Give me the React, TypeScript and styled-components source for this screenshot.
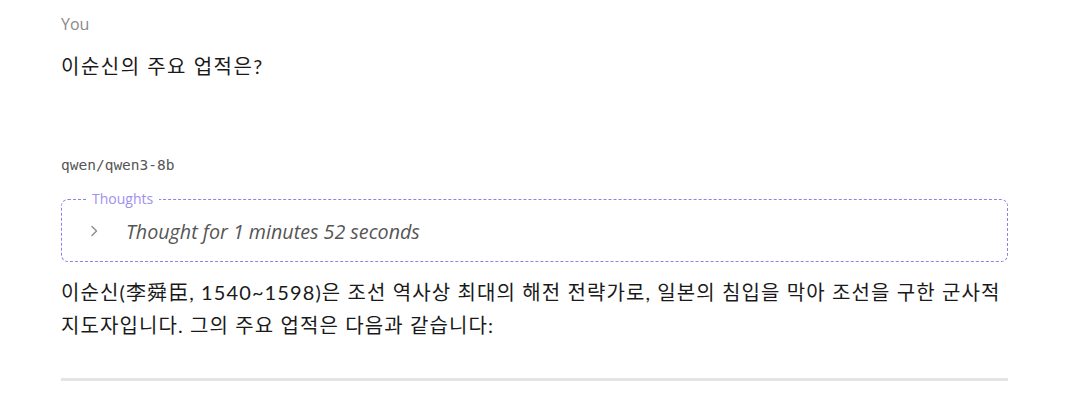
import styled, { createGlobalStyle } from 'styled-components';

const GlobalStyle = createGlobalStyle`
  body {
    margin: 0;
    background: #ffffff;
    font-family: 'Noto Sans CJK KR', 'Noto Sans', sans-serif;
  }
`;

const Page = styled.div`
  box-sizing: border-box;
  width: 1072px;
  padding: 12px 64px 0 61px;
`;

const Message = styled.div`
  display: flex;
  flex-direction: column;
`;

const Author = styled.div`
  font-family: 'Open Sans', 'Noto Sans', sans-serif;
  font-size: 16px;
  line-height: 24px;
  color: #8a8a8a;
`;

const Question = styled.div`
  margin-top: 16px;
  font-family: 'Lato', 'Noto Sans CJK KR', sans-serif;
  font-size: 20px;
  line-height: 28px;
  letter-spacing: 1.5px;
  color: #1a1a1a;
`;

const ModelName = styled.div`
  margin-top: 76px;
  font-family: 'DejaVu Sans Mono', 'Liberation Mono', monospace;
  font-size: 14.5px;
  line-height: 18px;
  color: #555;
`;

const ThoughtBox = styled.fieldset`
  margin: 17px 0 0;
  padding: 8px 24px 14px 24px;
  border: 1px dashed #8f80ea;
  border-radius: 7px;
  min-width: 0;
`;

const Legend = styled.legend`
  padding: 0 6px;
  font-family: 'Open Sans', 'Noto Sans', sans-serif;
  font-size: 14px;
  line-height: 16px;
  color: #a08ff0;
`;

const ThoughtRow = styled.div`
  display: flex;
  align-items: center;
  gap: 24px;
  height: 32px;
`;

const ThoughtLabel = styled.span`
  font-family: 'Open Sans', 'Noto Sans', sans-serif;
  font-style: italic;
  font-size: 19.7px;
  color: #555;
`;

const Answer = styled.p`
  margin: 14px 0 0;
  font-family: 'Lato', 'Noto Sans CJK KR', sans-serif;
  font-size: 20px;
  line-height: 33px;
  letter-spacing: 1.1px;
  word-break: keep-all;
  color: #1a1a1a;
`;

const Divider = styled.hr`
  margin: 36px 0 0;
  border: none;
  height: 3px;
  background: #e4e4e4;
`;

const Chevron = () => (
  <svg width="16" height="16" viewBox="0 0 16 16" fill="none">
    <path d="M6 3.5 L10.5 8 L6 12.5" stroke="#8c8c8c" strokeWidth="1.4" strokeLinecap="round" strokeLinejoin="round" />
  </svg>
);

export default function App() {
  return (
    <>
      <GlobalStyle />
      <Page>
        <Message>
          <Author>You</Author>
          <Question>이순신의 주요 업적은?</Question>
        </Message>
        <Message>
          <ModelName>qwen/qwen3-8b</ModelName>
          <ThoughtBox>
            <Legend>Thoughts</Legend>
            <ThoughtRow>
              <Chevron />
              <ThoughtLabel>Thought for 1 minutes 52 seconds</ThoughtLabel>
            </ThoughtRow>
          </ThoughtBox>
          <Answer>
            이순신(李舜臣, 1540~1598)은 조선 역사상 최대의 해전 전략가로, 일본의 침입을 막아 조선을 구한 군사적 지도자입니다. 그의 주요 업적은 다음과 같습니다:
          </Answer>
          <Divider />
        </Message>
      </Page>
    </>
  );
}
